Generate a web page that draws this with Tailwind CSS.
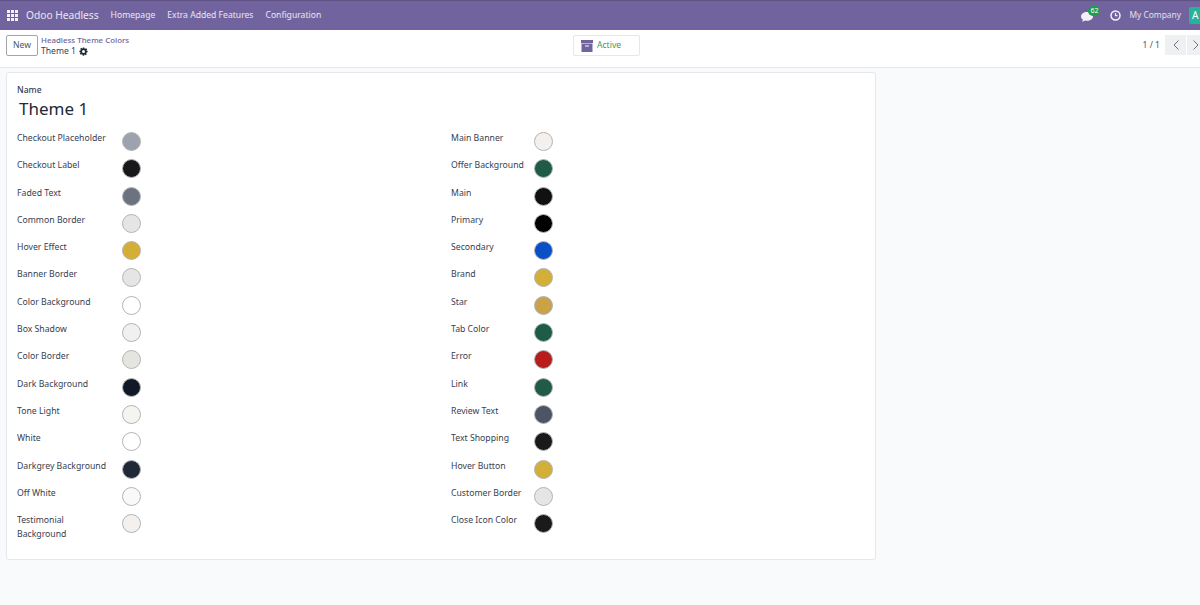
<!DOCTYPE html>
<html lang="en">
<head>
<meta charset="UTF-8" />
<script src="https://cdn.jsdelivr.net/npm/@tailwindcss/browser@4"></script>
<title>Headless Theme Colors</title>
</head>
<body class="h-[605px] overflow-hidden bg-[#f9fafb] font-['Noto_Sans',sans-serif] text-[#374151]">
	<!-- Navbar -->
	<nav class="h-[30px] bg-[#71639e] border-t border-[#5f5385] flex items-center text-white overflow-hidden">
		<svg class="ml-[7px] w-[11px] h-[11px]" viewBox="0 0 11 11" fill="#f3f1f7">
			<rect x="0" y="0" width="3" height="3"/><rect x="4" y="0" width="3" height="3"/><rect x="8" y="0" width="3" height="3"/>
			<rect x="0" y="4" width="3" height="3"/><rect x="4" y="4" width="3" height="3"/><rect x="8" y="4" width="3" height="3"/>
			<rect x="0" y="8" width="3" height="3"/><rect x="4" y="8" width="3" height="3"/><rect x="8" y="8" width="3" height="3"/>
		</svg>
		<span class="ml-[8px] text-[10.2px] text-white/85">Odoo Headless</span>
		<span class="ml-[12px] text-[8.6px] text-white/85">Homepage</span>
		<span class="ml-[12px] text-[8.6px] text-white/85">Extra Added Features</span>
		<span class="ml-[12px] text-[8.6px] text-white/85">Configuration</span>
		<div class="ml-auto flex items-center">
			<div class="relative w-[14px] h-[12px]">
				<svg class="w-[12px] h-[11px] mt-[2px]" viewBox="0 0 12 11" fill="#f3f1f7"><path d="M6 0C2.700 0 0 1.900 0 4.400c0 1.300.8 2.500 2 3.300L1.200 10l2.900-1.500c.6.1 1.300.2 1.900.2 3.300 0 6-1.900 6-4.300S9.300 0 6 0z"/></svg>
				<span class="absolute left-[7px] top-[-4px] h-[10px] px-[2px] rounded-full bg-[#1f9d4d] text-[7px] leading-[10px] text-white">62</span>
			</div>
			<svg class="ml-[15px] w-[11px] h-[11px]" viewBox="0 0 11 11" fill="none" stroke="#f3f1f7" stroke-width="1.500"><circle cx="5.500" cy="5.500" r="4.500"/><path d="M5.500 3v2.700h2" stroke-width="1.200"/></svg>
			<span class="ml-[8px] text-[8.4px] text-white/80">My Company</span>
			<div class="ml-[8px] w-[11px] h-[17px] bg-[#27b29a] rounded-l-[2px] text-[10px] leading-[17px] pl-[3px] overflow-hidden">A</div>
		</div>
	</nav>

	<!-- Control panel -->
	<div class="h-[38px] bg-white border-b border-[#e7e9ed] flex items-start pt-[5px] pl-[6px] relative">
		<button class="w-[32px] h-[21px] border border-[#a3a3ab] rounded-[2px] text-[8.6px] text-[#4b5563]">New</button>
		<div class="ml-[3px] leading-[11px]">
			<div class="text-[7.9px] font-medium text-[#71639e]">Headless Theme Colors</div>
			<div class="flex items-center text-[8.6px] text-[#374151]">Theme 1
				<svg class="ml-[3px] w-[9px] h-[9px]" viewBox="0 0 24 24" fill="#1f2937"><path fill-rule="evenodd" d="M10 1h4l.6 3.100 1.900.8 2.600-1.800 2.800 2.800-1.800 2.600.8 1.900L23 10v4l-3.100.6-.8 1.900 1.800 2.600-2.800 2.800-2.600-1.800-1.900.8L13.900 23h-4l-.5-3.100-1.900-.8-2.600 1.800-2.800-2.800 1.800-2.600-.8-1.900L1 14v-4l3.100-.5.8-1.900-1.800-2.600 2.800-2.800 2.600 1.800 1.900-.8zM12 8a4 4 0 1 0 0 8 4 4 0 0 0 0-8z"/></svg>
			</div>
		</div>
		<div class="absolute left-[573px] top-[5px] w-[67px] h-[21px] border border-[#e5e7eb] rounded-[2px] flex items-center pl-[7px]">
			<svg class="w-[12px] h-[12px]" viewBox="0 0 12 12" fill="#71639e"><rect x="0" y="0" width="12" height="3"/><path d="M.5 3.600h11V12H.5zM4 5.500v1h4v-1z" fill-rule="evenodd"/></svg>
			<span class="ml-[4px] text-[8.6px] text-[#3d9a57]">Active</span>
		</div>
		<div class="ml-auto flex items-center">
			<span class="text-[8.6px] text-[#4b5563]">1 / 1</span>
			<div class="ml-[5px] w-[21px] h-[20px] bg-[#eef0f2] flex items-center justify-center">
				<svg class="w-[6px] h-[10px]" viewBox="0 0 6 10" fill="none" stroke="#6b7280"><path d="M5.500.5L1 5l4.500 4.500"/></svg>
			</div>
			<div class="ml-[1px] w-[13px] h-[20px] bg-[#eef0f2] flex items-center pl-[6px]">
				<svg class="w-[6px] h-[10px]" viewBox="0 0 6 10" fill="none" stroke="#6b7280"><path d="M.5.5L5 5 .5 9.500"/></svg>
			</div>
		</div>
	</div>

	<!-- Form sheet -->
	<div class="ml-[6px] mt-[4px] w-[870px] h-[488px] bg-white border border-[#e5e7eb] rounded-[3px] pt-[11px] pl-[10px]">
		<div class="text-[8.6px] leading-[12px] font-medium text-[#374151]">Name</div>
		<div class="ml-[2px] text-[17px] leading-[26px] text-[#1f2937]">Theme 1</div>
		<div class="grid grid-cols-[434px_1fr] mt-[10px]">
			<!-- Left column -->
			<div>
				<div class="flex h-[27.3px]"><span class="w-[105px] text-[8.7px] leading-[13.6px]">Checkout Placeholder</span><span class="w-[19px] h-[19px] rounded-full border border-[#b4b4b4] bg-[#9ca3af]"></span></div>
				<div class="flex h-[27.3px]"><span class="w-[105px] text-[8.7px] leading-[13.6px]">Checkout Label</span><span class="w-[19px] h-[19px] rounded-full border border-[#b4b4b4] bg-[#18181b]"></span></div>
				<div class="flex h-[27.3px]"><span class="w-[105px] text-[8.7px] leading-[13.6px]">Faded Text</span><span class="w-[19px] h-[19px] rounded-full border border-[#b4b4b4] bg-[#6b7280]"></span></div>
				<div class="flex h-[27.3px]"><span class="w-[105px] text-[8.7px] leading-[13.6px]">Common Border</span><span class="w-[19px] h-[19px] rounded-full border border-[#b4b4b4] bg-[#e5e5e5]"></span></div>
				<div class="flex h-[27.3px]"><span class="w-[105px] text-[8.7px] leading-[13.6px]">Hover Effect</span><span class="w-[19px] h-[19px] rounded-full border border-[#b4b4b4] bg-[#d4af37]"></span></div>
				<div class="flex h-[27.3px]"><span class="w-[105px] text-[8.7px] leading-[13.6px]">Banner Border</span><span class="w-[19px] h-[19px] rounded-full border border-[#b4b4b4] bg-[#e5e5e5]"></span></div>
				<div class="flex h-[27.3px]"><span class="w-[105px] text-[8.7px] leading-[13.6px]">Color Background</span><span class="w-[19px] h-[19px] rounded-full border border-[#b4b4b4] bg-white"></span></div>
				<div class="flex h-[27.3px]"><span class="w-[105px] text-[8.7px] leading-[13.6px]">Box Shadow</span><span class="w-[19px] h-[19px] rounded-full border border-[#b4b4b4] bg-[#f0f0f0]"></span></div>
				<div class="flex h-[27.3px]"><span class="w-[105px] text-[8.7px] leading-[13.6px]">Color Border</span><span class="w-[19px] h-[19px] rounded-full border border-[#b4b4b4] bg-[#e5e5e0]"></span></div>
				<div class="flex h-[27.3px]"><span class="w-[105px] text-[8.7px] leading-[13.6px]">Dark Background</span><span class="w-[19px] h-[19px] rounded-full border border-[#b4b4b4] bg-[#111827]"></span></div>
				<div class="flex h-[27.3px]"><span class="w-[105px] text-[8.7px] leading-[13.6px]">Tone Light</span><span class="w-[19px] h-[19px] rounded-full border border-[#b4b4b4] bg-[#f5f5f0]"></span></div>
				<div class="flex h-[27.3px]"><span class="w-[105px] text-[8.7px] leading-[13.6px]">White</span><span class="w-[19px] h-[19px] rounded-full border border-[#b4b4b4] bg-white"></span></div>
				<div class="flex h-[27.3px]"><span class="w-[105px] text-[8.7px] leading-[13.6px]">Darkgrey Background</span><span class="w-[19px] h-[19px] rounded-full border border-[#b4b4b4] bg-[#1f2937]"></span></div>
				<div class="flex h-[27.3px]"><span class="w-[105px] text-[8.7px] leading-[13.6px]">Off White</span><span class="w-[19px] h-[19px] rounded-full border border-[#b4b4b4] bg-[#f9f9f9]"></span></div>
				<div class="flex h-[27.3px]"><span class="w-[105px] text-[8.7px] leading-[13.6px]">Testimonial<br />Background</span><span class="w-[19px] h-[19px] rounded-full border border-[#b4b4b4] bg-[#f3f0ee]"></span></div>
			</div>
			<!-- Right column -->
			<div>
				<div class="flex h-[27.3px]"><span class="w-[83px] text-[8.7px] leading-[13.6px]">Main Banner</span><span class="w-[19px] h-[19px] rounded-full border border-[#b4b4b4] bg-[#f3f0ee]"></span></div>
				<div class="flex h-[27.3px]"><span class="w-[83px] text-[8.7px] leading-[13.6px]">Offer Background</span><span class="w-[19px] h-[19px] rounded-full border border-[#b4b4b4] bg-[#1f5c46]"></span></div>
				<div class="flex h-[27.3px]"><span class="w-[83px] text-[8.7px] leading-[13.6px]">Main</span><span class="w-[19px] h-[19px] rounded-full border border-[#b4b4b4] bg-[#111111]"></span></div>
				<div class="flex h-[27.3px]"><span class="w-[83px] text-[8.7px] leading-[13.6px]">Primary</span><span class="w-[19px] h-[19px] rounded-full border border-[#b4b4b4] bg-black"></span></div>
				<div class="flex h-[27.3px]"><span class="w-[83px] text-[8.7px] leading-[13.6px]">Secondary</span><span class="w-[19px] h-[19px] rounded-full border border-[#b4b4b4] bg-[#0b4fc4]"></span></div>
				<div class="flex h-[27.3px]"><span class="w-[83px] text-[8.7px] leading-[13.6px]">Brand</span><span class="w-[19px] h-[19px] rounded-full border border-[#b4b4b4] bg-[#d4af37]"></span></div>
				<div class="flex h-[27.3px]"><span class="w-[83px] text-[8.7px] leading-[13.6px]">Star</span><span class="w-[19px] h-[19px] rounded-full border border-[#b4b4b4] bg-[#c9a24a]"></span></div>
				<div class="flex h-[27.3px]"><span class="w-[83px] text-[8.7px] leading-[13.6px]">Tab Color</span><span class="w-[19px] h-[19px] rounded-full border border-[#b4b4b4] bg-[#1f5c46]"></span></div>
				<div class="flex h-[27.3px]"><span class="w-[83px] text-[8.7px] leading-[13.6px]">Error</span><span class="w-[19px] h-[19px] rounded-full border border-[#b4b4b4] bg-[#b91c1c]"></span></div>
				<div class="flex h-[27.3px]"><span class="w-[83px] text-[8.7px] leading-[13.6px]">Link</span><span class="w-[19px] h-[19px] rounded-full border border-[#b4b4b4] bg-[#1f5c46]"></span></div>
				<div class="flex h-[27.3px]"><span class="w-[83px] text-[8.7px] leading-[13.6px]">Review Text</span><span class="w-[19px] h-[19px] rounded-full border border-[#b4b4b4] bg-[#4b5563]"></span></div>
				<div class="flex h-[27.3px]"><span class="w-[83px] text-[8.7px] leading-[13.6px]">Text Shopping</span><span class="w-[19px] h-[19px] rounded-full border border-[#b4b4b4] bg-[#1a1a1a]"></span></div>
				<div class="flex h-[27.3px]"><span class="w-[83px] text-[8.7px] leading-[13.6px]">Hover Button</span><span class="w-[19px] h-[19px] rounded-full border border-[#b4b4b4] bg-[#d4af37]"></span></div>
				<div class="flex h-[27.3px]"><span class="w-[83px] text-[8.7px] leading-[13.6px]">Customer Border</span><span class="w-[19px] h-[19px] rounded-full border border-[#b4b4b4] bg-[#e5e5e5]"></span></div>
				<div class="flex h-[27.3px]"><span class="w-[83px] text-[8.7px] leading-[13.6px]">Close Icon Color</span><span class="w-[19px] h-[19px] rounded-full border border-[#b4b4b4] bg-[#1a1a1a]"></span></div>
			</div>
		</div>
	</div>
</body>
</html>
